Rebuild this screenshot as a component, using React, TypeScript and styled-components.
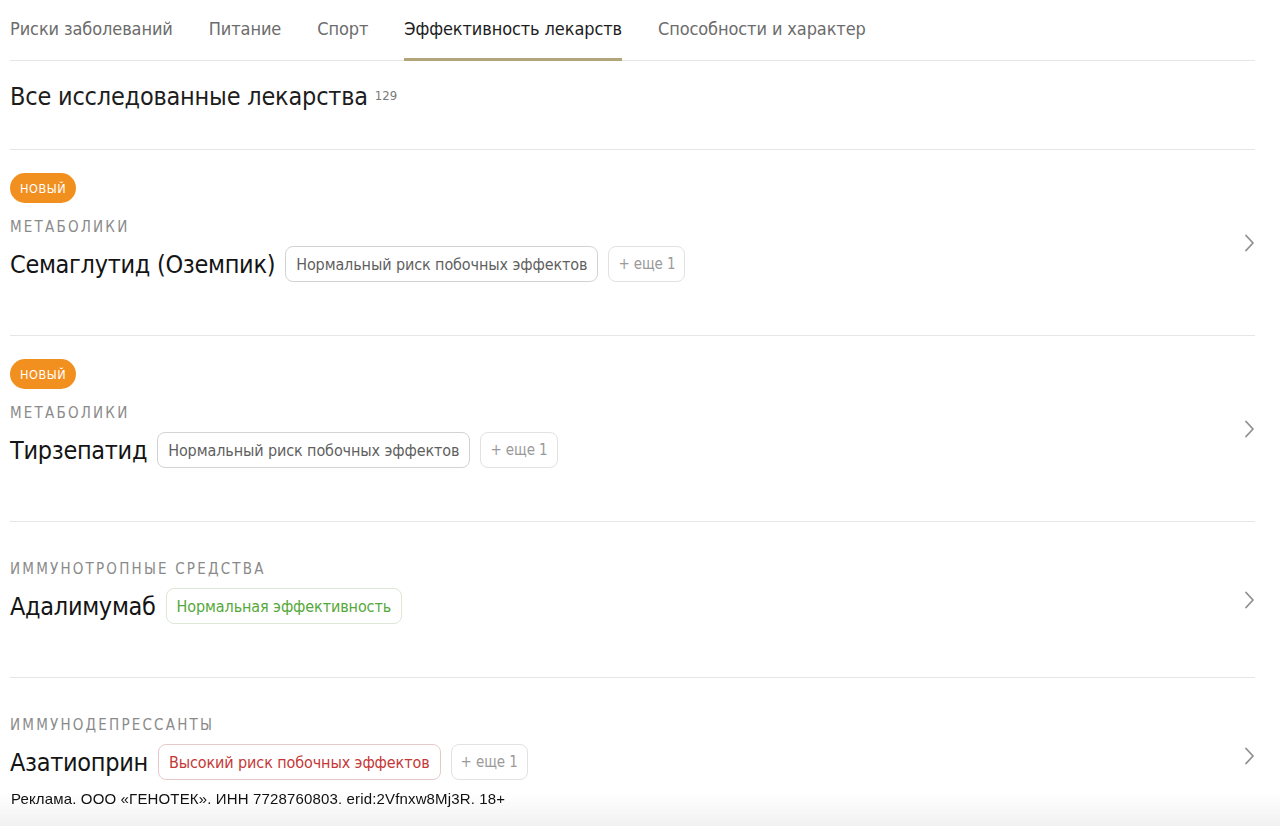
import React, { FC } from 'react'
import styled, { createGlobalStyle } from 'styled-components'

const GlobalStyle = createGlobalStyle`
  html, body {
    margin: 0;
    padding: 0;
    background: #fff;
  }
  body {
    font-family: "DejaVu Sans Condensed", "Liberation Sans", sans-serif;
    color: #1d1d1d;
    -webkit-font-smoothing: antialiased;
  }
`

type TagTone = 'neutral' | 'good' | 'bad' | 'more'

interface Drug {
  isNew?: boolean
  group: string
  name: string
  tag: { text: string; tone: TagTone }
  extra?: number
}

const tabs = ['Риски заболеваний', 'Питание', 'Спорт', 'Эффективность лекарств', 'Способности и характер']
const activeTab = 3

const drugs: Drug[] = [
  {
    isNew: true,
    group: 'Метаболики',
    name: 'Семаглутид (Оземпик)',
    tag: { text: 'Нормальный риск побочных эффектов', tone: 'neutral' },
    extra: 1,
  },
  {
    isNew: true,
    group: 'Метаболики',
    name: 'Тирзепатид',
    tag: { text: 'Нормальный риск побочных эффектов', tone: 'neutral' },
    extra: 1,
  },
  {
    group: 'Иммунотропные средства',
    name: 'Адалимумаб',
    tag: { text: 'Нормальная эффективность', tone: 'good' },
  },
  {
    group: 'Иммунодепрессанты',
    name: 'Азатиоприн',
    tag: { text: 'Высокий риск побочных эффектов', tone: 'bad' },
    extra: 1,
  },
]

const tagColors: Record<TagTone, { color: string; border: string }> = {
  neutral: { color: '#5f5f5f', border: '#d3d3d3' },
  good: { color: '#55a83a', border: '#dde8d6' },
  bad: { color: '#c43838', border: '#e6caca' },
  more: { color: '#9a9a9a', border: '#e2e2e2' },
}

const Chevron: FC = () => (
  <svg width="12" height="20" viewBox="0 0 12 20" fill="none">
    <path d="M3 2.5l7 7.5-7 7.5" stroke="#8f8f8f" strokeWidth="1.8" strokeLinecap="round" strokeLinejoin="round" />
  </svg>
)

const App: FC = () => (
  <>
    <GlobalStyle />
    <Page>
      <Tabs>
        {tabs.map((t, i) => (
          <Tab key={t} $active={i === activeTab}>
            {t}
          </Tab>
        ))}
      </Tabs>
      <Heading>
        Все исследованные лекарства <Count>129</Count>
      </Heading>
      <List>
        {drugs.map((d) => (
          <Item key={d.name}>
            <ItemBody>
              {d.isNew && <NewBadge>новый</NewBadge>}
              <Group>{d.group}</Group>
              <NameRow>
                <Name>{d.name}</Name>
                <Tag $tone={d.tag.tone}>{d.tag.text}</Tag>
                {d.extra && <Tag $tone="more">+ еще {d.extra}</Tag>}
              </NameRow>
            </ItemBody>
            <Chevron />
          </Item>
        ))}
      </List>
    </Page>
    <AdNote>Реклама. ООО «ГЕНОТЕК». ИНН 7728760803. erid:2Vfnxw8Mj3R. 18+</AdNote>
  </>
)

const Page = styled.div`
  width: 1245px;
  margin-left: 10px;
`

const Tabs = styled.nav`
  display: flex;
  align-items: flex-start;
  gap: 36px;
  height: 61px;
  border-bottom: 1px solid #e6e6e6;
  box-sizing: border-box;
`

const Tab = styled.div<{ $active?: boolean }>`
  display: flex;
  align-items: center;
  height: 61px;
  padding-bottom: 1px;
  font-size: 18px;
  letter-spacing: -0.1px;
  color: ${({ $active }) => ($active ? '#1d1d1d' : '#6c6c6c')};
  border-bottom: 3px solid ${({ $active }) => ($active ? '#b3a57a' : 'transparent')};
  box-sizing: border-box;
  position: relative;
  z-index: 1;
`

const Heading = styled.h1`
  margin: 0;
  height: 89px;
  display: flex;
  align-items: baseline;
  padding-top: 21px;
  box-sizing: border-box;
  font-size: 25px;
  letter-spacing: -0.2px;
  font-weight: 400;
  border-bottom: 1px solid #e6e6e6;
`

const Count = styled.sup`
  font-size: 13px;
  letter-spacing: 0;
  color: #7a7a7a;
  margin-left: 7px;
  position: relative;
  top: -5px;
`

const List = styled.div`
  display: flex;
  flex-direction: column;
`

const Item = styled.div`
  display: flex;
  align-items: center;
  justify-content: space-between;
  border-bottom: 1px solid #e6e6e6;
`

const ItemBody = styled.div`
  display: flex;
  flex-direction: column;
  align-items: flex-start;
  padding: 23px 0 53px;
`

const NewBadge = styled.span`
  height: 30px;
  display: inline-flex;
  align-items: center;
  padding: 0 10px;
  border-radius: 15px;
  background: #f2901f;
  color: #fff;
  font-size: 12.5px;
  text-transform: uppercase;
  letter-spacing: 0.6px;
  box-sizing: border-box;
`

const Group = styled.div`
  margin-top: 14px;
  height: 20px;
  line-height: 20px;
  font-size: 15px;
  letter-spacing: 2.2px;
  text-transform: uppercase;
  color: #8a8a8a;
`

const NameRow = styled.div`
  margin-top: 9px;
  display: flex;
  align-items: center;
  gap: 10px;
  height: 36px;
`

const Name = styled.span`
  font-size: 25px;
  letter-spacing: -0.3px;
  color: #141414;
`

const Tag = styled.span<{ $tone: TagTone }>`
  height: 36px;
  display: inline-flex;
  align-items: center;
  padding: 0 ${({ $tone }) => ($tone === 'more' ? 9 : 10)}px;
  border-radius: 8px;
  border: 1px solid ${({ $tone }) => tagColors[$tone].border};
  color: ${({ $tone }) => tagColors[$tone].color};
  font-size: ${({ $tone }) => ($tone === 'more' ? 15 : 16)}px;
  letter-spacing: -0.1px;
  box-sizing: border-box;
`

const AdNote = styled.div`
  position: fixed;
  left: 0;
  right: 0;
  bottom: 0;
  height: 46px;
  padding: 10px 0 0 11px;
  box-sizing: border-box;
  font-family: "Liberation Sans", Arial, sans-serif;
  font-size: 15px;
  letter-spacing: 0.15px;
  color: #111;
  background: linear-gradient(to bottom, rgba(255, 255, 255, 0) 0%, rgba(255, 255, 255, 0.9) 30%, #f1f1f1 100%);
`

export default App
